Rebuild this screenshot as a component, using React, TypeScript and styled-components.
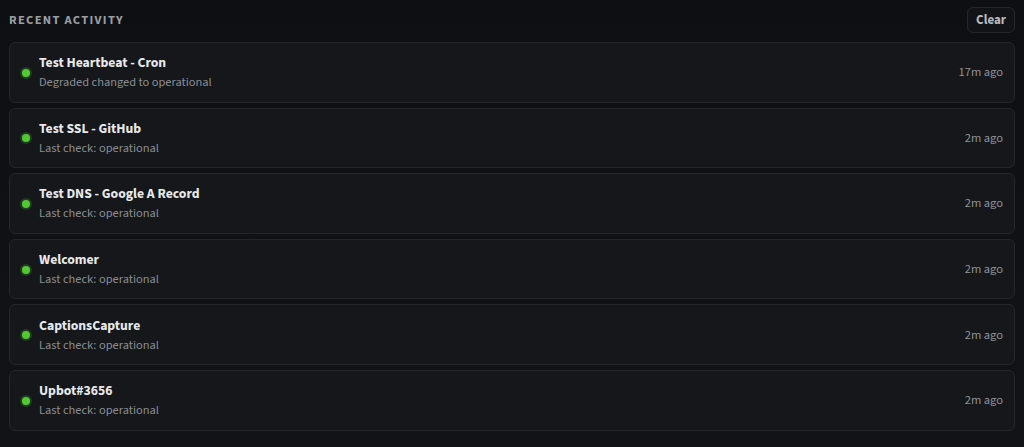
import React from 'react';
import styled, { createGlobalStyle } from 'styled-components';

const GlobalStyle = createGlobalStyle`
  html, body {
    margin: 0;
    padding: 0;
    background: #0c0e11;
  }
  body {
    font-family: 'Source Sans 3', 'Noto Sans', sans-serif;
  }
`;

const Panel = styled.div`
  width: 1024px;
  height: 447px;
  box-sizing: border-box;
  padding: 7px 9px 0 9px;
  background: linear-gradient(180deg, #0d0f12 0%, #111316 100%);
`;

const Header = styled.div`
  display: flex;
  align-items: center;
  justify-content: space-between;
  height: 26px;
  margin-bottom: 9px;
`;

const Title = styled.h3`
  margin: 0;
  font-size: 12.5px;
  font-weight: 700;
  letter-spacing: 1.3px;
  text-transform: uppercase;
  color: #9a9ea3;
`;

const ClearButton = styled.button`
  height: 26px;
  padding: 0 8px;
  border: 1px solid #24272b;
  border-radius: 6px;
  background: #111317;
  color: #b8bbbf;
  font-family: inherit;
  font-size: 13px;
  font-weight: 700;
  cursor: pointer;
`;

const List = styled.div`
  display: flex;
  flex-direction: column;
  gap: 5px;
`;

const Card = styled.div`
  display: flex;
  align-items: center;
  height: 60.6px;
  box-sizing: border-box;
  padding: 0 11px 0 12px;
  border: 1px solid #23262a;
  border-radius: 6px;
  background: #15171b;
`;

const Dot = styled.span<{ $color: string }>`
  width: 8px;
  height: 8px;
  flex-shrink: 0;
  border-radius: 50%;
  background: ${(p) => p.$color};
  box-shadow: 0 0 0 2px rgba(76, 200, 50, 0.22);
  margin: 1px 9px 0 0;
`;

const Info = styled.div`
  display: flex;
  flex-direction: column;
  flex: 1;
  gap: 2px;
  padding-top: 1px;
`;

const Name = styled.div`
  font-size: 13.7px;
  font-weight: 700;
  color: #e8e9eb;
  line-height: 18px;
`;

const Detail = styled.div`
  font-size: 12.4px;
  color: #8a8e93;
  line-height: 17px;
`;

const Time = styled.div`
  font-size: 12.5px;
  color: #8f9398;
`;

const activity = [
  { name: 'Test Heartbeat - Cron', detail: 'Degraded changed to operational', time: '17m ago' },
  { name: 'Test SSL - GitHub', detail: 'Last check: operational', time: '2m ago' },
  { name: 'Test DNS - Google A Record', detail: 'Last check: operational', time: '2m ago' },
  { name: 'Welcomer', detail: 'Last check: operational', time: '2m ago' },
  { name: 'CaptionsCapture', detail: 'Last check: operational', time: '2m ago' },
  { name: 'Upbot#3656', detail: 'Last check: operational', time: '2m ago' },
];

const App = () => {
  return (
    <>
      <GlobalStyle />
      <Panel>
        <Header>
          <Title>Recent Activity</Title>
          <ClearButton>Clear</ClearButton>
        </Header>
        <List>
          {activity.map((item) => (
            <Card key={item.name}>
              <Dot $color='#52c932' />
              <Info>
                <Name>{item.name}</Name>
                <Detail>{item.detail}</Detail>
              </Info>
              <Time>{item.time}</Time>
            </Card>
          ))}
        </List>
      </Panel>
    </>
  );
};

export default App;
